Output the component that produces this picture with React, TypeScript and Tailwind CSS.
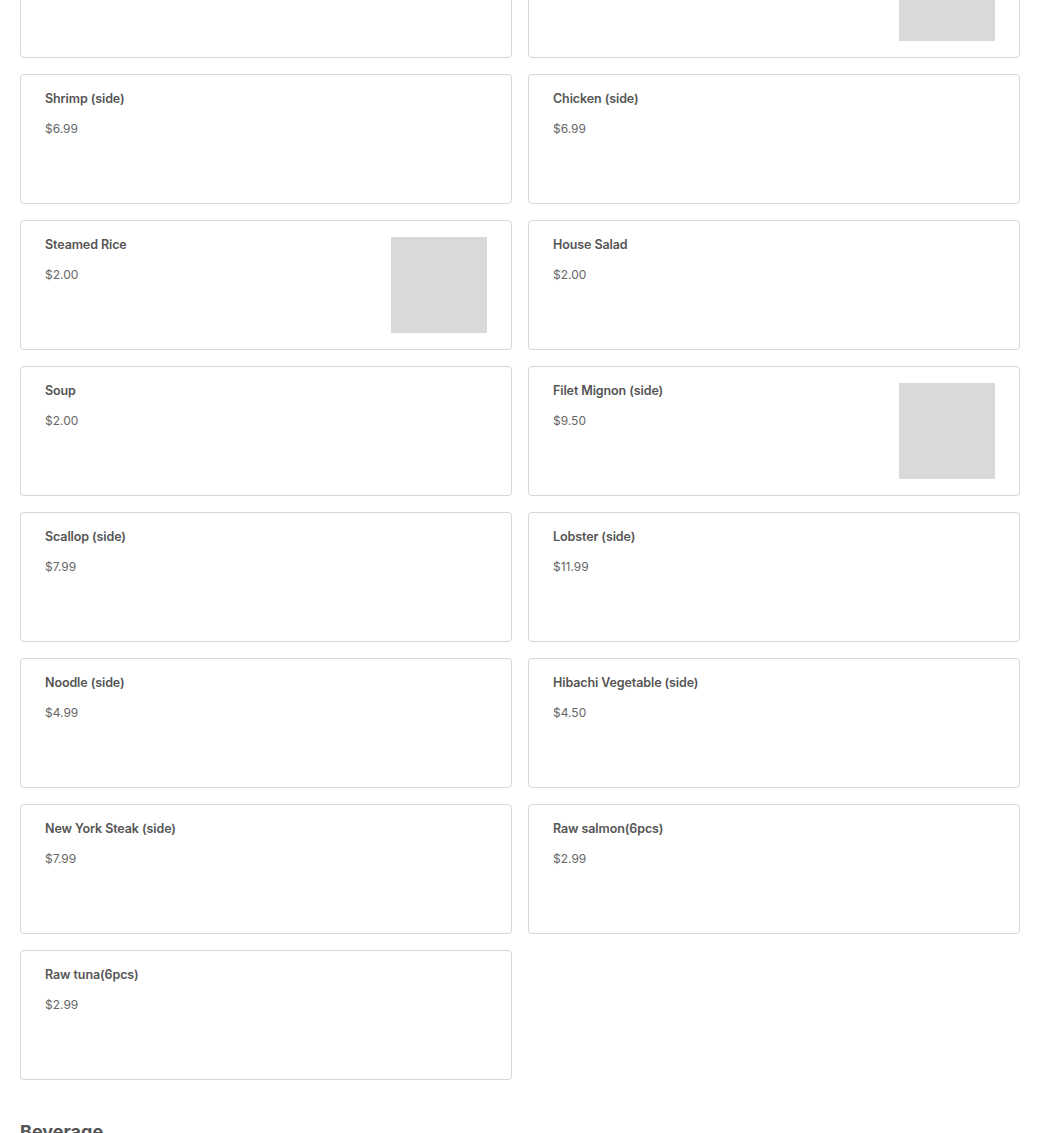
import React from "react";

type Item = { name: string; price: string; img?: boolean };

const items: Item[] = [
  { name: "", price: "" },
  { name: "", price: "", img: true },
  { name: "Shrimp (side)", price: "$6.99" },
  { name: "Chicken (side)", price: "$6.99" },
  { name: "Steamed Rice", price: "$2.00", img: true },
  { name: "House Salad", price: "$2.00" },
  { name: "Soup", price: "$2.00" },
  { name: "Filet Mignon (side)", price: "$9.50", img: true },
  { name: "Scallop (side)", price: "$7.99" },
  { name: "Lobster (side)", price: "$11.99" },
  { name: "Noodle (side)", price: "$4.99" },
  { name: "Hibachi Vegetable (side)", price: "$4.50" },
  { name: "New York Steak (side)", price: "$7.99" },
  { name: "Raw salmon(6pcs)", price: "$2.99" },
  { name: "Raw tuna(6pcs)", price: "$2.99" },
];

function Card({ item }: { item: Item }) {
  return (
    <div className="h-[130px] border border-[#d6d6d6] rounded-[4px] bg-white flex justify-between pl-6 pr-6 pt-4">
      <div className="flex flex-col">
        {item.name && (
          <>
            <div className="text-[12.5px] leading-4 font-semibold text-[#555] tracking-[-0.1px]">{item.name}</div>
            <div className="text-[12px] leading-4 text-[#666] mt-[14px]">{item.price}</div>
          </>
        )}
      </div>
      {item.img && <div className="w-24 h-24 bg-[#d9d9d9] shrink-0" />}
    </div>
  );
}

export default function App() {
  return (
    <div className="w-[1040px] h-[1133px] overflow-hidden bg-white" style={{ fontFamily: "Inter, 'Noto Sans', sans-serif" }}>
      <div className="px-5 -mt-[72px]">
        <div className="grid grid-cols-2 gap-4">
          {items.map((it, i) => (
            <Card key={i} item={it} />
          ))}
        </div>
        <h2 className="mt-[38px] text-[18px] leading-7 font-bold text-[#555]">Beverage</h2>
      </div>
    </div>
  );
}
